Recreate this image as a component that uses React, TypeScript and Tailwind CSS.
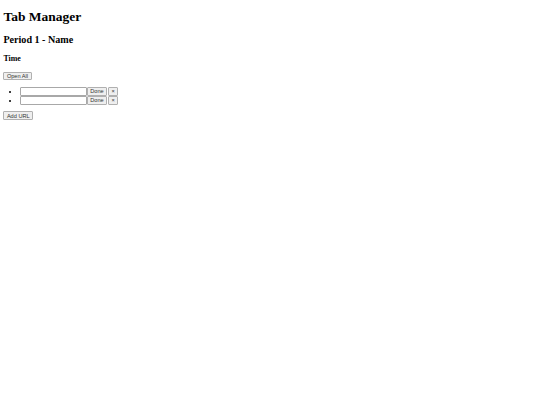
const serif = "font-['Liberation_Serif',serif]";
const btn =
  "font-['Liberation_Sans',Arial,sans-serif] text-[5.625px] leading-[6.5px] text-[#333] bg-[#efefef] border-[0.5px] border-[#b0b0b0] rounded-[1px] px-[2.5px] py-[0.8px] h-[8.9px]";

function Row() {
  return (
    <li className="h-[9px] leading-[9px]">
      <div className="inline-flex items-center align-top h-[9px]">
        <input
          type="text"
          className="w-[66.5px] h-[8.9px] bg-white border-[0.5px] border-[#a8a8a8] rounded-[1px] outline-none"
        />
        <button className={btn}>Done</button>
        <button className={`${btn} ml-[0.8px] w-[10.2px] px-0`}>×</button>
      </div>
    </li>
  );
}

export default function App() {
  const urls = ["", ""];
  return (
    <div className={`${serif} text-black bg-white min-h-[405px] px-[3.375px] pt-[9.3px] text-[6.75px]`}>
      <h1 className="text-[13.5px] leading-[15.5px] font-bold">Tab Manager</h1>
      <h2 className="mt-[9px] text-[10.125px] leading-[11.6px] font-bold">Period 1 - Name</h2>
      <h3 className="mt-[8.9px] text-[7.9px] leading-[9.1px] font-bold">Time</h3>
      <div className="mt-[8.2px] flex">
        <button className={btn}>Open All</button>
      </div>
      <ul className="mt-[6.2px] pl-[16.9px] list-disc">
        {urls.map((u, i) => (
          <Row key={i} />
        ))}
      </ul>
      <div className="mt-[6.2px] flex">
        <button className={btn}>Add URL</button>
      </div>
    </div>
  );
}
